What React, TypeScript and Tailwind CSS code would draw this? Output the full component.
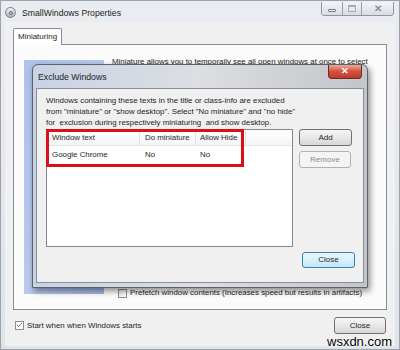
import { Check } from 'lucide-react'

const ui = "font-['Liberation_Sans',Arial,sans-serif]"

function Button({ label, className = '', disabled = false, focused = false }: { label: string; className?: string; disabled?: boolean; focused?: boolean }) {
  const look = disabled
    ? 'border-[#adb2b5] bg-[#f4f4f4] text-[#8d8d8d]'
    : focused
      ? 'border-[#3c7fb1] bg-gradient-to-b from-[#eaf6fd] via-[#d9f0fc] to-[#bee6fd] text-[#1e1e1e]'
      : 'border-[#707070] bg-gradient-to-b from-[#f6f6f6] via-[#e8e8e8] to-[#d6d6d6] text-[#1e1e1e]'
  return (
    <div className={`flex items-center justify-center rounded-[3px] border text-[8px] ${look} ${className}`}>
      {label}
    </div>
  )
}

export default function App() {
  return (
    <div className={`relative w-[400px] h-[350px] overflow-hidden bg-[#dde2e8] ${ui}`}>
      {/* main window */}
      <div className="flex h-full flex-col border border-[#9ca3ab] bg-gradient-to-b from-[#e9edf1] to-[#dfe4ea]">
        {/* title bar */}
        <div className="flex h-[21px] shrink-0 items-start">
          <div className="mt-[6px] ml-[4px] flex h-[11px] w-[11px] items-center justify-center rounded-full border border-[#7b8088] bg-gradient-to-b from-[#f4f4f4] to-[#a9aeb5]">
            <div className="h-[4px] w-[4px] rounded-full border border-[#6a6e75]" />
          </div>
          <span className="mt-[6px] ml-[6px] whitespace-nowrap text-[8.7px] leading-[12px] text-[#1c1c1c]">SmallWindows Properties</span>
          <div className="ml-auto mr-[5px] flex h-[14px] mt-[1px] overflow-hidden rounded-b-[4px] border border-t-0 border-[#8f969e]">
            <div className="flex w-[20px] items-end justify-center bg-gradient-to-b from-[#f2f4f6] to-[#d9dee4] pb-[3px]">
              <div className="h-[3px] w-[8px] rounded-[1px] border border-[#767c84] bg-white" />
            </div>
            <div className="flex w-[19px] items-center justify-center border-l border-[#9aa0a8] bg-gradient-to-b from-[#f2f4f6] to-[#d9dee4]">
              <div className="h-[7px] w-[8px] border border-[#a4aab1] border-t-2" />
            </div>
            <div className="flex w-[32px] items-center justify-center border-l border-[#9aa0a8] bg-gradient-to-b from-[#f2f4f6] to-[#d9dee4] text-[10px] font-bold text-[#8a9098]">
              ✕
            </div>
          </div>
        </div>

        {/* client area */}
        <div className="mx-[4px] mb-[3px] flex flex-1 flex-col bg-[#f0f0f0] px-[8px] pt-[6px]">
          <div className="flex">
            <div className="z-10 -mb-px flex h-[17px] items-center rounded-t-[2px] border border-b-0 border-[#898c95] bg-white px-[4px] text-[8px] text-[#1e1e1e]">
              Miniaturing
            </div>
          </div>
          <div className="flex h-[266px] border border-[#898c95] bg-[#fbfbfb]">
            <div className="mt-[15px] mb-[15px] ml-[10px] w-[80px] bg-gradient-to-br from-[#aec2ea] via-[#b9c9ec] to-[#9fb5e3]" />
            <div className="flex flex-1 flex-col justify-between pl-[8px] pt-[11px] pb-[10px]">
              <span className="whitespace-nowrap text-[7.9px] leading-[11px] text-[#1e1e1e]">Miniature allows you to temporaily see all open windows at once to select</span>
              <div className="ml-[6px] flex items-center gap-[3px] whitespace-nowrap text-[7.9px] text-[#1e1e1e]">
                <div className="h-[9px] w-[9px] border border-[#8f8f8f] bg-gradient-to-br from-[#e4e4e4] to-white" />
                <span>Prefetch window contents (Increases speed but results in artifacts)</span>
              </div>
            </div>
          </div>
          <div className="mt-[7px] flex items-center">
            <div className="flex items-center gap-[3px] text-[7.9px] text-[#1e1e1e]">
              <div className="ml-[2px] flex h-[9px] w-[9px] items-center justify-center border border-[#8f8f8f] bg-white">
                <Check className="h-[8px] w-[8px] text-[#4a5f8a]" strokeWidth={3} />
              </div>
              <span>Start when when Windows starts</span>
            </div>
            <Button label="Close" className="ml-auto mr-[1px] h-[17px] w-[52px]" />
          </div>
        </div>
      </div>

      {/* Exclude Windows dialog */}
      <div className="absolute left-[32px] top-[64px] flex h-[224px] w-[336px] flex-col rounded-t-[6px] border border-[#5d6168] bg-gradient-to-r from-[#c9d3e6] via-[#dcdee1] to-[#c2c5c9] shadow-[2px_3px_6px_rgba(0,0,0,0.45)]">
        <div className="flex h-[23px] shrink-0 items-start">
          <span className="mt-[7px] ml-[5px] text-[8.7px] leading-[11px] text-[#1c1c1c]">Exclude Windows</span>
          <div className="ml-auto mr-[5px] flex h-[14px] w-[34px] items-center justify-center rounded-b-[4px] border border-t-0 border-[#6e2a24] bg-gradient-to-b from-[#e9a99c] via-[#d2513d] to-[#c0392b] text-[9px] font-bold text-white">
            ✕
          </div>
        </div>
        <div className="mx-[3px] mb-[4px] flex flex-1 flex-col border border-[#8a8f96] bg-[#f0f0f0] px-[9px] pt-[6px]">
          <div className="whitespace-nowrap text-[7.9px] leading-[11px] text-[#1e1e1e]">
            <div>Windows containing these texts in the title or class-info are excluded</div>
            <div>from "miniature" or "show desktop". Select "No miniature" and "no hide"</div>
            <div>for&nbsp; exclusion during respectively miniaturing&nbsp; and show desktop.</div>
          </div>
          <div className="mt-[1px] flex">
            <div className="relative h-[118px] w-[247px] border border-[#828790] bg-white text-[7.9px] text-[#1e1e1e]">
              <div className="flex h-[16px] border-b border-[#e2e3e6] bg-gradient-to-b from-white to-[#f4f5f7]">
                <div className="flex w-[93px] items-center border-r border-[#e2e3e6] pl-[5px]">Window text</div>
                <div className="flex w-[56px] items-center border-r border-[#e2e3e6] pl-[5px]">Do miniature</div>
                <div className="flex w-[50px] items-center border-r border-[#e2e3e6] pl-[4px]">Allow Hide</div>
              </div>
              <div className="flex h-[17px]">
                <div className="flex w-[93px] items-center pl-[5px]">Google Chrome</div>
                <div className="flex w-[56px] items-center pl-[5px]">No</div>
                <div className="flex w-[50px] items-center pl-[4px]">No</div>
              </div>
              {/* red highlight */}
              <div className="absolute -left-[1px] -top-[1px] h-[38px] w-[198px] border-[3px] border-[#dc0f18]" />
            </div>
            <div className="ml-[6px] flex flex-col gap-[5px]">
              <Button label="Add" className="h-[17px] w-[53px]" />
              <Button label="Remove" className="h-[17px] w-[52px]" disabled />
            </div>
          </div>
          <div className="mt-[5px] flex">
            <Button label="Close" className="ml-auto mr-[-1px] h-[16px] w-[53px]" focused />
          </div>
        </div>
      </div>

      {/* watermark */}
      <span className="absolute left-[327px] top-[335px] text-[13px] leading-[14px] text-black [text-shadow:0_0_2px_white,0_0_2px_white]">
        wsxdn.com
      </span>
    </div>
  )
}
